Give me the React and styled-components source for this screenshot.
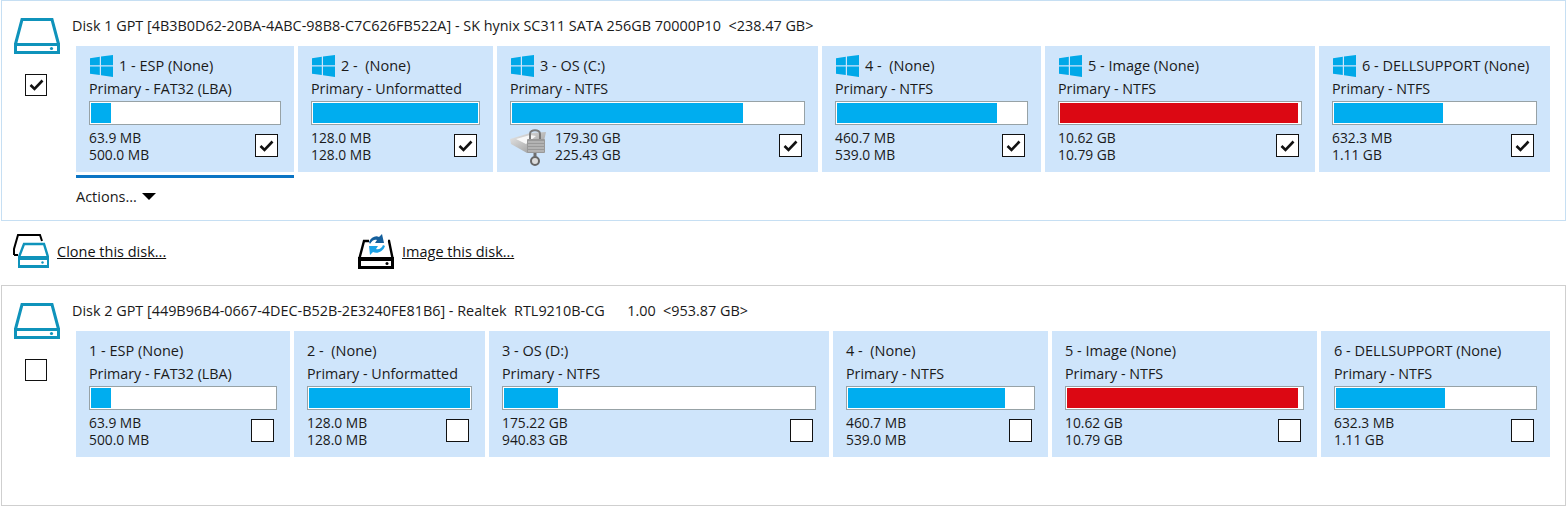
import styled, { createGlobalStyle } from "styled-components";

const disks = [
  {
    title: "Disk 1 GPT [4B3B0D62-20BA-4ABC-98B8-C7C626FB522A] - SK hynix SC311 SATA 256GB 70000P10  <238.47 GB>",
    checked: true,
    windows: true,
    parts: [
      { w: 218, name: "1 - ESP (None)", fs: "FAT32 (LBA)", fill: 20, used: "63.9 MB", total: "500.0 MB" },
      { w: 195, name: "2 -  (None)", fs: "Unformatted", fill: 165, used: "128.0 MB", total: "128.0 MB" },
      { w: 321, name: "3 - OS (C:)", fs: "NTFS", fill: 231, used: "179.30 GB", total: "225.43 GB", locked: true },
      { w: 219, name: "4 -  (None)", fs: "NTFS", fill: 160, used: "460.7 MB", total: "539.0 MB" },
      { w: 270, name: "5 - Image (None)", fs: "NTFS", fill: 238, red: true, used: "10.62 GB", total: "10.79 GB" },
      { w: 231, name: "6 - DELLSUPPORT (None)", fs: "NTFS", fill: 109, used: "632.3 MB", total: "1.11 GB" },
    ],
  },
  {
    title: "Disk 2 GPT [449B96B4-0667-4DEC-B52B-2E3240FE81B6] - Realtek  RTL9210B-CG      1.00  <953.87 GB>",
    checked: false,
    windows: false,
    parts: [
      { w: 214, name: "1 - ESP (None)", fs: "FAT32 (LBA)", fill: 20, used: "63.9 MB", total: "500.0 MB" },
      { w: 191, name: "2 -  (None)", fs: "Unformatted", fill: 161, used: "128.0 MB", total: "128.0 MB" },
      { w: 340, name: "3 - OS (D:)", fs: "NTFS", fill: 54, used: "175.22 GB", total: "940.83 GB" },
      { w: 215, name: "4 -  (None)", fs: "NTFS", fill: 157, used: "460.7 MB", total: "539.0 MB" },
      { w: 265, name: "5 - Image (None)", fs: "NTFS", fill: 231, red: true, used: "10.62 GB", total: "10.79 GB" },
      { w: 229, name: "6 - DELLSUPPORT (None)", fs: "NTFS", fill: 109, used: "632.3 MB", total: "1.11 GB" },
    ],
  },
];

function DiskIcon() {
  return (
    <svg width="46" height="36" viewBox="0 0 46 36">
      <path d="M1.5 26 L8 1.5 H38 L44.5 26" fill="none" stroke="#0f93bb" strokeWidth="3" />
      <path d="M0 25 H46 V36 H0 Z M3 28 V33 H43 V28 Z" fill="#0f93bb" fillRule="evenodd" />
      <circle cx="37.5" cy="30.5" r="1.6" fill="#0f93bb" />
    </svg>
  );
}

function WindowsLogo() {
  return (
    <svg width="23" height="22" viewBox="0 0 23 22">
      <path d="M0 3.2 L9.8 1.8 V10.3 H0 Z M11 1.6 L23 0 V10.3 H11 Z M0 11.5 H9.8 V20 L0 18.7 Z M11 11.5 H23 V22 L11 20.3 Z" fill="#00a8e8" />
    </svg>
  );
}

function LockedDrive() {
  return (
    <svg width="36" height="38" viewBox="0 0 36 38">
      <defs>
        <linearGradient id="metal" x1="0" y1="0" x2="1" y2="1">
          <stop offset="0" stopColor="#ececec" />
          <stop offset="1" stopColor="#8f8f8f" />
        </linearGradient>
      </defs>
      <path d="M0 10 L20 4 L36 3 L34 12 L17 24 L1 15 Z" fill="url(#metal)" />
      <path d="M6 10 L20 6 L26 7 L16 15 Z" fill="#f7f7f7" />
      <path d="M20 11 V5 C20 0 30 0 30 5 V11" fill="none" stroke="#7a7a7a" strokeWidth="2" />
      <rect x="17" y="10" width="18" height="14" rx="1" fill="#999999" />
      <path d="M18 13 H34 M18 16 H34 M18 19 H34 M18 22 H34" stroke="#cccccc" />
      <path d="M25 24 V27" stroke="#6f6f6f" strokeWidth="3" />
      <circle cx="25" cy="32" r="4" fill="#dcdcdc" stroke="#666666" strokeWidth="2" />
    </svg>
  );
}

function CloneIcon() {
  return (
    <svg width="36" height="34" viewBox="0 0 36 34">
      <path d="M1 21 V15 L5 1 H27 L29 7" fill="none" stroke="#000" strokeWidth="2" />
      <path d="M1 21 H5" stroke="#000" strokeWidth="2" />
      <path d="M6 23 L11 10 H31 L35 23" fill="#fff" stroke="#0f93bb" strokeWidth="2.4" />
      <path d="M5 22 H36 V34 H5 Z M7 26 V31 H34 V26 Z" fill="#0f93bb" fillRule="evenodd" />
      <circle cx="29.5" cy="28.5" r="1.2" fill="#0f93bb" />
    </svg>
  );
}

function ImageIcon() {
  return (
    <svg width="36" height="36" viewBox="0 0 36 36">
      <path d="M1.5 25 L6 8 H11 M30 8 H31 L34.5 25" fill="none" stroke="#000" strokeWidth="2.4" />
      <path d="M0 24 H36 V36 H0 Z M3 28 V33 H33 V28 Z" fillRule="evenodd" fill="#000" />
      <circle cx="29" cy="30.5" r="1.5" fill="#000" />
      <path d="M11 9 C13 4 18 2 21 4 L24 1 L26 10 L17 10 L19 7 C17 6 14 7 12 11 Z" fill="#155f9c" />
      <path d="M27 13 C25 19 19 21 15 19 L12 22 L11 13 L20 13 L18 16 C21 17 24 15 25 12 Z" fill="#1ba1e6" />
    </svg>
  );
}

function Partition({ part, checked, windows }) {
  return (
    <PartCard $w={part.w}>
      <PartTitle>
        {windows && (
          <LogoSlot>
            <WindowsLogo />
          </LogoSlot>
        )}
        <span>{part.name}</span>
      </PartTitle>
      <PartType>Primary - {part.fs}</PartType>
      <UsageBar>
        <UsageFill $red={part.red} style={{ width: part.fill }} />
      </UsageBar>
      <PartFooter>
        {part.locked && (
          <LockSlot>
            <LockedDrive />
          </LockSlot>
        )}
        <Sizes>
          <div>{part.used}</div>
          <div>{part.total}</div>
        </Sizes>
        <CheckBox checked={checked} />
      </PartFooter>
    </PartCard>
  );
}

function CheckBox({ checked }) {
  return (
    <Box>
      {checked && (
        <svg width="15" height="12" viewBox="0 0 15 12">
          <path d="M1.5 6 L5.5 10 L13.5 1.5" fill="none" stroke="#111" strokeWidth="2.6" />
        </svg>
      )}
    </Box>
  );
}

function Disk({ disk, active }) {
  return (
    <Panel $active={active}>
      <DiskSide>
        <DiskIcon />
        <CheckBox checked={disk.checked} />
      </DiskSide>
      <DiskBody>
        <DiskTitle>{disk.title}</DiskTitle>
        <PartRow>
          {disk.parts.map((p, i) => (
            <PartSlot key={p.name} $w={p.w}>
              <Partition part={p} checked={disk.checked} windows={disk.windows} />
              {active && i === 0 && (
                <>
                  <Underline />
                  <Actions>
                    Actions...
                    <Caret />
                  </Actions>
                </>
              )}
            </PartSlot>
          ))}
        </PartRow>
      </DiskBody>
    </Panel>
  );
}

export default function App() {
  return (
    <Page>
      <GlobalStyle />
      <Disk disk={disks[0]} active />
      <LinkBar>
        <ActionLink $w={345}>
          <CloneIcon />
          <a>Clone this disk...</a>
        </ActionLink>
        <ActionLink>
          <ImageIcon />
          <a>Image this disk...</a>
        </ActionLink>
      </LinkBar>
      <Disk disk={disks[1]} />
    </Page>
  );
}

const GlobalStyle = createGlobalStyle`
  html, body {
    margin: 0;
    padding: 0;
    background: #ffffff;
  }
  body {
    font-family: "Open Sans", "Noto Sans", sans-serif;
    font-size: 14.5px;
    color: #1a1a1a;
  }
`;

const Page = styled.div`
  width: 1567px;
  height: 508px;
  overflow: hidden;
  padding: 0 1px;
  box-sizing: border-box;
`;

const Panel = styled.section`
  box-sizing: border-box;
  height: 221px;
  display: flex;
  border: 1px solid ${(p) => (p.$active ? "#c6dff3" : "#cfcfcf")};
  padding: 17px 0 0 12px;
`;

const DiskSide = styled.div`
  width: 62px;
  flex: none;
  display: flex;
  flex-direction: column;
  gap: 20px;
  align-items: flex-start;

  & > div {
    margin: 0 0 0 11px;
    width: 22px;
    height: 22px;
  }
`;

const DiskBody = styled.div`
  display: flex;
  flex-direction: column;
  min-width: 0;
`;

const DiskTitle = styled.div`
  margin-left: -4px;
  height: 28px;
  font-size: 14.4px;
  line-height: 16px;
  white-space: pre;
`;

const PartRow = styled.div`
  display: flex;
  gap: 4px;
`;

const PartSlot = styled.div`
  flex: 0 0 ${(p) => p.$w}px;
  width: ${(p) => p.$w}px;
`;

const PartCard = styled.div`
  box-sizing: border-box;
  height: 126px;
  background: #cfe5fb;
  padding: 8px 13px 0;
  display: flex;
  flex-direction: column;
`;

const PartTitle = styled.div`
  height: 23px;
  display: flex;
  align-items: center;
  gap: 6px;
  white-space: pre;
`;

const LogoSlot = styled.span`
  display: flex;
  margin-left: 1px;
`;

const PartType = styled.div`
  height: 24px;
  line-height: 24px;
  font-size: 14.3px;
  white-space: pre;
`;

const UsageBar = styled.div`
  box-sizing: border-box;
  height: 24px;
  background: #ffffff;
  border: 1px solid #97a2a6;
  padding: 1px;
`;

const UsageFill = styled.div`
  height: 100%;
  background: ${(p) => (p.$red ? "#dc0813" : "#00adef")};
`;

const PartFooter = styled.div`
  margin-top: 4px;
  display: flex;
  align-items: flex-start;
`;

const LockSlot = styled.div`
  flex: none;
  width: 36px;
  margin-right: 9px;
`;

const Sizes = styled.div`
  flex: 1;
  font-size: 13.8px;
  line-height: 17px;
`;

const Box = styled.div`
  box-sizing: border-box;
  flex: none;
  width: 23px;
  height: 23px;
  margin: 5px 3px 0 0;
  background: #ffffff;
  border: 1px solid #111;
  display: flex;
  align-items: center;
  justify-content: center;
`;

const Underline = styled.div`
  height: 3px;
  margin-top: 3px;
  background: #0a74c4;
`;

const Actions = styled.div`
  margin-top: 10px;
  display: flex;
  align-items: center;
  gap: 5px;
  line-height: 18px;
`;

const Caret = styled.span`
  width: 0;
  height: 0;
  border-left: 7px solid transparent;
  border-right: 7px solid transparent;
  border-top: 7px solid #000;
  margin-top: -2px;
`;

const LinkBar = styled.div`
  height: 64px;
  box-sizing: border-box;
  padding: 0 0 4px 12px;
  display: flex;
  align-items: center;
`;

const ActionLink = styled.div`
  width: ${(p) => (p.$w ? `${p.$w}px` : "auto")};
  display: flex;
  align-items: center;
  gap: 8px;

  a {
    color: #111;
    text-decoration: underline;
  }
`;
